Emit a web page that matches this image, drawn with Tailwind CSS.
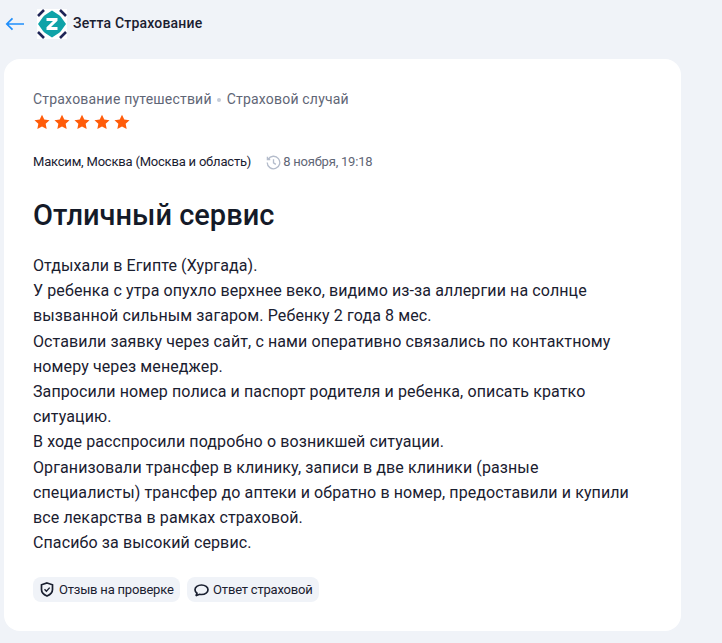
<!DOCTYPE html>
<html lang="ru">
<head>
    <meta charset="UTF-8">
    <meta name="viewport" content="width=device-width, initial-scale=1.0">
    <title>Отзыв</title>
    <script src="https://cdn.jsdelivr.net/npm/@tailwindcss/browser@4"></script>
</head>
<body class="bg-[#f0f3f8] h-[643px] overflow-hidden font-['Roboto',sans-serif] text-[#1a2030]">
    <header class="h-[59px] flex items-center pl-[5px] pb-[12px]">
        <svg class="w-[20px] h-[16px]" viewBox="0 0 20 16" fill="none" stroke="#1f8efa" stroke-width="1.700">
            <path d="M19 8H2M7.500 2.300 1.800 8 7.500 13.700"/>
        </svg>
        <svg class="w-[30px] h-[30px] ml-[12px]" viewBox="0 0 30 30">
            <rect width="30" height="30" fill="#fff"/>
            <path d="M1 7 7 1M23 1 29 7M1 23 7 29M29 23 23 29" stroke="#1f2557" stroke-width="2.600" fill="none"/>
            <path d="M1 15 6 8Q7 6.500 8.500 5.800L15 1.500 21.500 5.800Q23 6.500 24 8L29 15 24 22Q23 23.500 21.500 24.200L15 28.500 8.500 24.200Q7 23.500 6 22Z" fill="#0fa3a8"/>
            <path d="M9.500 9H20.500V11.800L14 18H20.500V21H9.500V18.200L16 12H9.500Z" fill="#fff"/>
        </svg>
        <span class="ml-[6px] text-[14px] font-medium tracking-[0.2px]">Зетта Страхование</span>
    </header>

    <main class="ml-[4px] w-[677px] h-[572px] bg-white rounded-[16px] pl-[29px] pt-[31px]">
        <div class="flex items-center text-[14px] leading-[18px] tracking-[0.2px] text-[#5f6676]">
            <span>Страхование путешествий</span>
            <span class="w-[4px] h-[4px] rounded-full bg-[#c5ccd8] mx-[5.500px] mt-[2px]"></span>
            <span>Страховой случай</span>
        </div>

        <div class="flex gap-[4px] mt-[5px] h-[18px] items-center pl-[1px]">
            <svg class="w-[16px] h-[16px]" viewBox="0 0 24 24" fill="#ff5c0a"><path d="M12 1l3.400 7.300 7.900 1-5.800 5.400 1.500 7.900L12 18.700l-7 3.900 1.500-7.900L.7 9.300l7.900-1z"/></svg>
            <svg class="w-[16px] h-[16px]" viewBox="0 0 24 24" fill="#ff5c0a"><path d="M12 1l3.400 7.300 7.900 1-5.800 5.400 1.500 7.900L12 18.700l-7 3.900 1.500-7.900L.7 9.300l7.900-1z"/></svg>
            <svg class="w-[16px] h-[16px]" viewBox="0 0 24 24" fill="#ff5c0a"><path d="M12 1l3.400 7.300 7.900 1-5.800 5.400 1.500 7.900L12 18.700l-7 3.900 1.500-7.900L.7 9.300l7.900-1z"/></svg>
            <svg class="w-[16px] h-[16px]" viewBox="0 0 24 24" fill="#ff5c0a"><path d="M12 1l3.400 7.300 7.900 1-5.800 5.400 1.500 7.900L12 18.700l-7 3.900 1.500-7.900L.7 9.300l7.900-1z"/></svg>
            <svg class="w-[16px] h-[16px]" viewBox="0 0 24 24" fill="#ff5c0a"><path d="M12 1l3.400 7.300 7.900 1-5.800 5.400 1.500 7.900L12 18.700l-7 3.900 1.500-7.900L.7 9.300l7.900-1z"/></svg>
        </div>

        <div class="flex items-center mt-[22px] text-[13px] leading-[18px] tracking-[-0.2px]">
            <span class="text-[#1a2030]">Максим, Москва (Москва и область)</span>
            <svg class="w-[15px] h-[15px] ml-[15px]" viewBox="0 0 16 16" fill="none" stroke="#b4bccb" stroke-width="1.400">
                <path d="M2.300 4.500A6.700 6.700 0 1 1 1.300 8M1.500 1.800V4.800H4.500M8 4.500V8.300L10.500 10"/>
            </svg>
            <span class="ml-[2px] text-[#5f6676]">8 ноября, 19:18</span>
        </div>

        <h1 class="mt-[26px] text-[29px] leading-[36px] font-medium text-[#141a28]">Отличный сервис</h1>

        <p class="mt-[20px] w-[600px] text-[16px] leading-[25.200px] tracking-[0.11px] text-[#1a2030]">
            Отдыхали в Египте (Хургада).<br>
            У ребенка с утра опухло верхнее веко, видимо из-за аллергии на солнце вызванной сильным загаром. Ребенку 2 года 8 мес.<br>
            Оставили заявку через сайт, с нами оперативно связались по контактному номеру через менеджер.<br>
            Запросили номер полиса и паспорт родителя и ребенка, описать кратко ситуацию.<br>
            В ходе расспросили подробно о возникшей ситуации.<br>
            Организовали трансфер в клинику, записи в две клиники (разные специалисты) трансфер до аптеки и обратно в номер, предоставили и купили все лекарства в рамках страховой.<br>
            Спасибо за высокий сервис.
        </p>

        <div class="flex gap-[7px] mt-[22px] text-[13px] tracking-[-0.2px]">
            <div class="flex items-center h-[25px] pl-[7px] pr-[6.500px] bg-[#f0f3f8] rounded-[8px]">
                <svg class="w-[14px] h-[15px] mr-[5px]" viewBox="0 0 14 15" fill="none" stroke="#1a2030" stroke-width="1.700">
                    <path d="M7 1 12.500 2.800V7.500C12.500 10.500 10 12.800 7 14 4 12.800 1.500 10.500 1.500 7.500V2.800Z"/>
                    <path d="M4.500 7.300 6.400 9.200 9.700 5.600" stroke-width="1.400"/>
                </svg>
                <span>Отзыв на проверке</span>
            </div>
            <div class="flex items-center h-[25px] pl-[7px] pr-[6.500px] bg-[#f0f3f8] rounded-[8px]">
                <svg class="w-[15px] h-[14px] mr-[4px]" viewBox="0 0 15 14" fill="none" stroke="#1a2030" stroke-width="1.700">
                    <path d="M3 10.200C1.700 9.300 1 8.100 1 6.800 1 4.200 3.800 2 7.500 2S14 4.200 14 6.800 11.200 11.500 7.500 11.500C6.800 11.500 6.200 11.400 5.600 11.300L1.800 12.800C2.500 12 2.900 11.100 3 10.200Z"/>
                </svg>
                <span>Ответ страховой</span>
            </div>
        </div>
    </main>
</body>
</html>
